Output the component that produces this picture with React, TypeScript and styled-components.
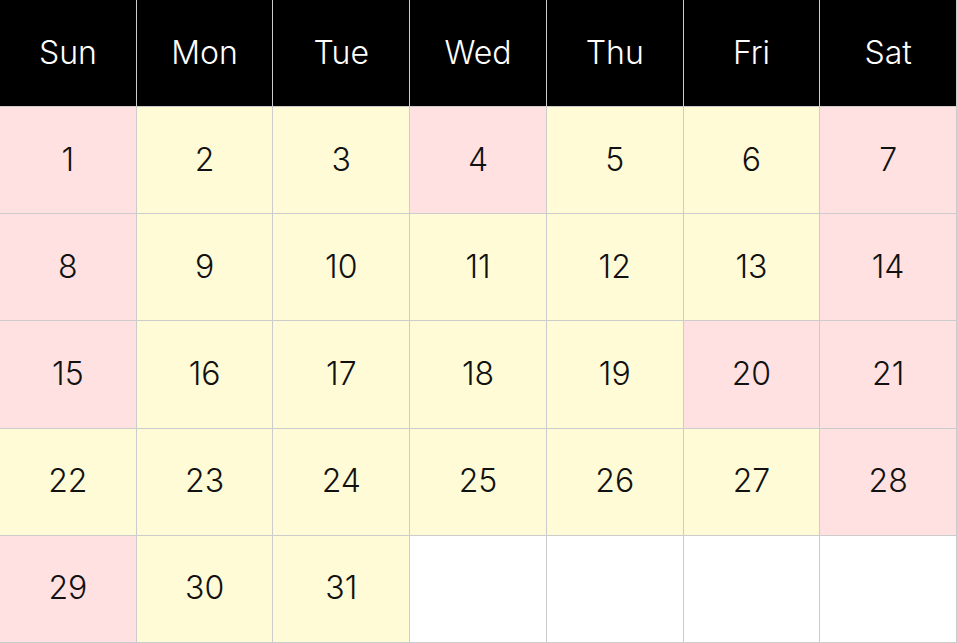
import styled, {createGlobalStyle} from "styled-components";

const GlobalStyle = createGlobalStyle`
    body {
        margin: 0;
        background: #ffffff;
        font-family: Inter, "Liberation Sans", sans-serif;
    }
`

type DayKind = "holiday" | "work" | "empty";

const weekDays = ["Sun", "Mon", "Tue", "Wed", "Thu", "Fri", "Sat"];
const holidays = [1, 4, 7, 8, 14, 15, 20, 21, 28, 29];

const days: Array<{ label: string, kind: DayKind }> = [];
for (let d = 1; d <= 31; d++) {
    days.push({label: String(d), kind: holidays.includes(d) ? "holiday" : "work"});
}
while (days.length < 35) {
    days.push({label: "", kind: "empty"});
}

const cellColors: Record<DayKind, string> = {
    holiday: "#ffe1e1",
    work: "#fffbd7",
    empty: "#ffffff",
};

export default function App() {
    return (
        <>
            <GlobalStyle/>
            <Calendar>
                {weekDays.map((name) => (
                    <HeadCell key={name}>{name}</HeadCell>
                ))}
                {days.map((day, index) => (
                    <DayCell key={index} kind={day.kind}>{day.label}</DayCell>
                ))}
            </Calendar>
        </>
    );
}

const Calendar = styled.div`
    display: grid;
    grid-template-columns: repeat(7, 1fr);
    grid-template-rows: repeat(6, 1fr);
    width: 957px;
    height: 643px;
`

const Cell = styled.div`
    box-sizing: border-box;
    display: flex;
    align-items: center;
    justify-content: center;
    padding: 1px 0 3px;
    border-right: 1px solid #cccccc;
    border-bottom: 1px solid #cccccc;
    font-size: 32px;
    font-weight: 340;
`

const HeadCell = styled(Cell)`
    background: #000000;
    color: #ffffff;
`

const DayCell = styled(Cell)<{ kind: DayKind }>`
    background: ${({kind}) => cellColors[kind]};
    color: #111111;
`
